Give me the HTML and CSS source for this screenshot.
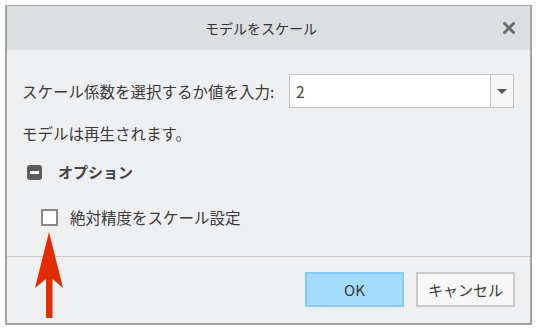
FILE: index.html
```html
<!DOCTYPE html>
<html lang="ja">
<head>
    <meta charset="UTF-8">
    <title>モデルをスケール</title>
    <link rel="stylesheet" href="styles.css">
</head>
<body>
    <div class="dialog">
        <div class="title-bar">
            <span></span>
            <div class="title">モデルをスケール</div>
            <svg class="close" width="12" height="12" viewBox="0 0 12 12">
                <path d="M1.5 1.5 L10.5 10.5 M10.5 1.5 L1.5 10.5" stroke="#6b6b6b" stroke-width="3" stroke-linecap="square"/>
            </svg>
        </div>

        <div class="content">
            <div class="row scale-row">
                <span class="label">スケール係数を選択するか値を入力:</span>
                <div class="combo">
                    <div class="combo-value">2</div>
                    <div class="combo-button"><span class="triangle"></span></div>
                </div>
            </div>
            <div class="row note">モデルは再生されます。</div>
            <div class="row options">
                <span class="collapse-icon"></span>
                <span class="options-label">オプション</span>
            </div>
            <div class="row check-row">
                <span class="checkbox"></span>
                <span class="label">絶対精度をスケール設定</span>
            </div>
        </div>

        <div class="footer">
            <button class="btn btn-ok">OK</button>
            <button class="btn">キャンセル</button>
        </div>

        <!-- аннотация -->
        <svg class="arrow" width="30" height="88" viewBox="0 0 30 88">
            <path d="M14 0 L28 56 L17.5 47 L17.5 86 L11 86 L11 47 L0 56 Z" fill="#e22d00"/>
        </svg>
    </div>
</body>
</html>
```

FILE: styles.css
```css
body {
    margin: 5px;
    background-color: #ffffff;
    font-family: "Noto Sans CJK JP", "Noto Sans", sans-serif;
    color: #3a3a3a;
}
.dialog {
    width: 527px;
    height: 320px;
    box-sizing: border-box;
    border: 2px solid #a3a3a3;
    border-top-width: 1px;
    background-color: #eeeff1;
    position: relative;
    display: flex;
    flex-direction: column;
}
.title-bar {
    height: 44px;
    background-color: #dcdfe0;
    display: grid;
    grid-template-columns: 1fr auto 1fr;
    align-items: center;
    padding-right: 15px;
}
.title {
    font-size: 14px;
    color: #333;
}
.close {
    justify-self: end;
}
.content {
    padding: 24px 16px 0 15px;
    display: flex;
    flex-direction: column;
    font-size: 15.5px;
    line-height: 20px;
}
.row {
    display: flex;
    align-items: center;
}
.combo {
    margin-left: auto;
    width: 225px;
    height: 34px;
    box-sizing: border-box;
    border: 1px solid #c3c3c3;
    background-color: #fff;
    display: flex;
}
.combo-value {
    flex: 1;
    padding-left: 6px;
    line-height: 32px;
    color: #444;
}
.combo-button {
    width: 22px;
    border-left: 1px solid #c8c8c8;
    background-color: #f6f6f6;
    display: flex;
    justify-content: center;
    align-items: center;
}
.triangle {
    width: 0;
    height: 0;
    border-left: 5px solid transparent;
    border-right: 5px solid transparent;
    border-top: 5px solid #555;
}
.note {
    margin-top: 15px;
}
.options {
    margin-top: 19px;
    padding-left: 5px;
    gap: 16px;
}
.collapse-icon {
    width: 15px;
    height: 15px;
    border-radius: 3px;
    background-color: #5c5c5c;
    display: flex;
    justify-content: center;
    align-items: center;
}
.collapse-icon::after {
    content: "";
    width: 9px;
    height: 3px;
    background-color: #fff;
}
.options-label {
    font-size: 15px;
    font-weight: bold;
    color: #444;
}
.check-row {
    margin-top: 25px;
    padding-left: 19px;
    gap: 12px;
}
.checkbox {
    width: 17px;
    height: 17px;
    box-sizing: border-box;
    border: 2px solid #8a8a8a;
    background-color: #fff;
}
.footer {
    margin-top: auto;
    border-top: 1px solid #c9c9c9;
    padding: 15px 15px 16px 0;
    display: flex;
    justify-content: flex-end;
    gap: 12px;
}
.btn {
    width: 99px;
    height: 35px;
    box-sizing: border-box;
    border: 2px solid #cacaca;
    background-color: #f7f7f7;
    font-family: "Noto Sans CJK JP", "Noto Sans", sans-serif;
    font-size: 15px;
    color: #3a3a3a;
    padding: 0;
}
.btn-ok {
    background-color: #a4dcfd;
    border-color: #83cbf7;
}
.arrow {
    position: absolute;
    left: 28px;
    top: 226px;
}
```
